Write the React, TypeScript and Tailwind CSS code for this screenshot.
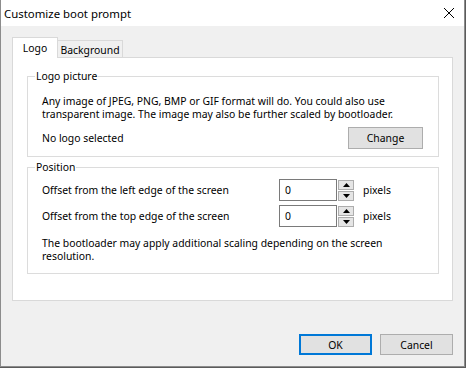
import React from "react"

const font = { fontFamily: '"Segoe UI", "Noto Sans", sans-serif' }

function SpinBox({ value }: { value: string }) {
  return (
    <div className="flex h-[22px]">
      <div className="flex h-[22px] w-[58px] items-center border border-[#7a7a7a] bg-white pl-[5px] leading-[14px]">
        {value}
      </div>
      <div className="flex h-[22px] w-[17px] flex-col justify-center gap-[1px] pl-[1px]">
        <div className="flex h-[10px] w-[16px] items-center justify-center border border-[#adadad] bg-[#e5e5e5]">
          <svg width="7" height="4" viewBox="0 0 7 4">
            <path d="M3.5 0 L7 4 L0 4 Z" fill="#000" />
          </svg>
        </div>
        <div className="flex h-[10px] w-[16px] items-center justify-center border border-[#adadad] bg-[#e5e5e5]">
          <svg width="7" height="4" viewBox="0 0 7 4">
            <path d="M0 0 L7 0 L3.5 4 Z" fill="#000" />
          </svg>
        </div>
      </div>
    </div>
  )
}

export default function App() {
  return (
    <div className="h-[368px] w-[466px] whitespace-nowrap bg-[#5b5b5b] text-[10.4px] text-black" style={font}>
      <div className="flex h-[367px] w-[465px] flex-col border-x border-b border-[#8c8c8c] bg-[#f0f0f0]">
        {/* title bar */}
        <div className="flex h-[26px] items-center justify-between bg-white pl-[3px] pr-[8px]">
          <span className="mt-[1px] text-[11.4px] leading-[16px]">Customize boot prompt</span>
          <svg width="12" height="12" viewBox="0 0 12 12" className="mr-[1px] mb-[1px]">
            <path d="M1 1 L11 11 M11 1 L1 11" stroke="#000" strokeWidth="1" />
          </svg>
        </div>

        {/* tabs */}
        <div className="mt-[11px] flex items-end pl-[11px]">
          <div className="relative z-10 -mb-px flex h-[21px] w-[46px] items-start justify-center border-x border-t border-[#d9d9d9] bg-white pt-[3px] leading-[14px]">
            Logo
          </div>
          <div className="flex h-[17px] w-[65px] items-center justify-center border-r border-t border-[#d9d9d9] bg-[#f0f0f0] pt-[1px] leading-[14px]">
            Background
          </div>
        </div>

        {/* panel */}
        <div className="ml-[11px] flex h-[244px] w-[441px] flex-col border border-[#d9d9d9] bg-white pl-[14px] pr-[13px]">
          <fieldset className="mt-[10px] min-w-0 border border-[#dcdcdc] pb-[7px] pl-[14px] pr-[15px]">
            <legend className="-ml-[7px] px-[1px] leading-[16px]">Logo picture</legend>
            <p className="mt-[11px] leading-[13px]">
              Any image of JPEG, PNG, BMP or GIF format will do. You could also use
              <br />
              transparent image. The image may also be further scaled by bootloader.
            </p>
            <div className="mt-[6px] flex items-center justify-between">
              <span className="leading-[14px]">No logo selected</span>
              <button className="h-[22px] w-[75px] border border-[#adadad] bg-[#e1e1e1] leading-[14px]">
                Change
              </button>
            </div>
          </fieldset>

          <fieldset className="mt-[2px] min-w-0 border border-[#dcdcdc] pb-[10px] pl-[14px] pr-[15px]">
            <legend className="-ml-[7px] px-[1px] leading-[16px]">Position</legend>
            <div className="mt-[4px] flex flex-col gap-[4px]">
              <div className="flex items-center">
                <span className="w-[237px] leading-[14px]">Offset from the left edge of the screen</span>
                <SpinBox value="0" />
                <span className="ml-[9px] leading-[14px]">pixels</span>
              </div>
              <div className="flex items-center">
                <span className="w-[237px] leading-[14px]">Offset from the top edge of the screen</span>
                <SpinBox value="0" />
                <span className="ml-[9px] leading-[14px]">pixels</span>
              </div>
            </div>
            <p className="mt-[10px] leading-[13px]">
              The bootloader may apply additional scaling depending on the screen
              <br />
              resolution.
            </p>
          </fieldset>
        </div>

        {/* buttons */}
        <div className="mt-[33px] flex justify-end gap-[8px] pr-[11px]">
          <button className="h-[21px] w-[73px] border-2 border-[#0078d7] bg-[#e1e1e1] leading-[14px]">OK</button>
          <button className="h-[21px] w-[73px] border border-[#adadad] bg-[#e1e1e1] leading-[14px]">Cancel</button>
        </div>
      </div>
    </div>
  )
}
